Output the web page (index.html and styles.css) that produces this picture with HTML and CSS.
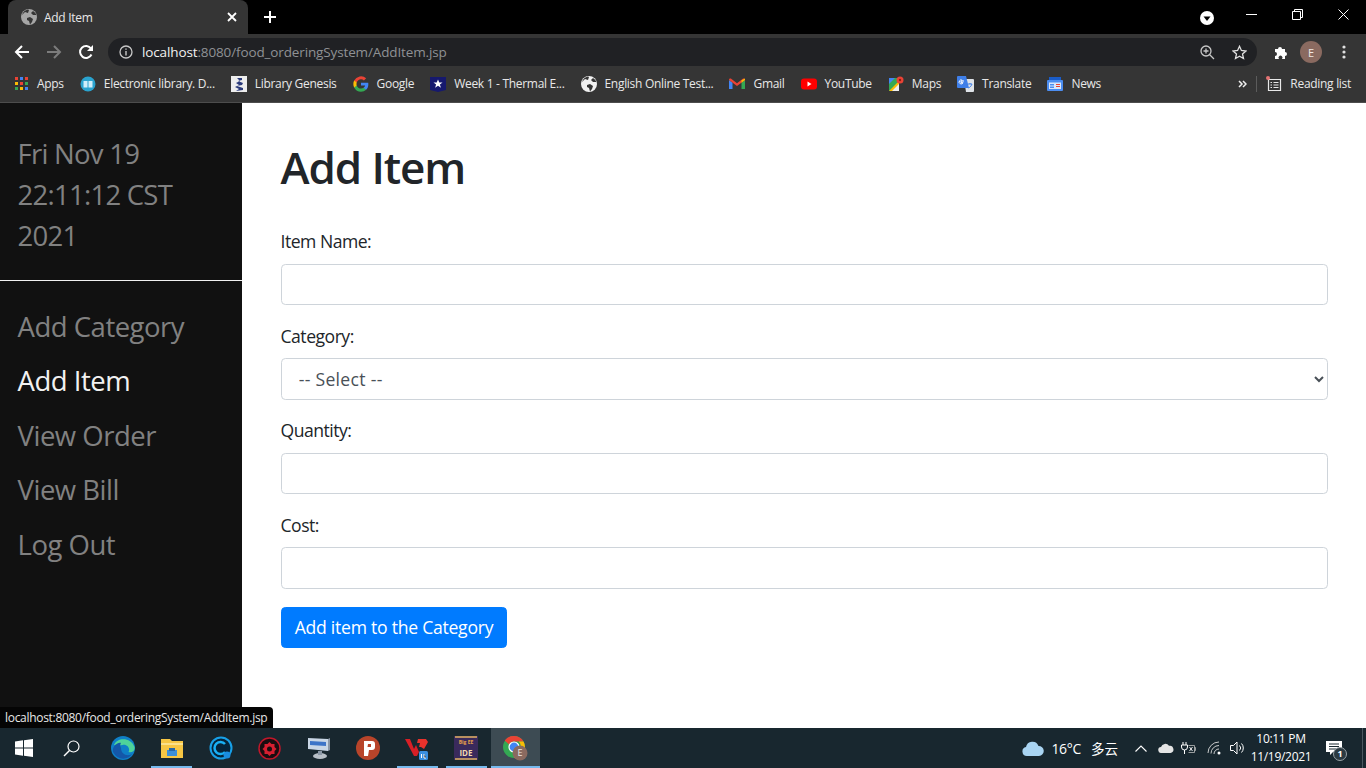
FILE: index.html
```html
<!DOCTYPE html>
<html lang="en">
<head>
    <meta charset="UTF-8">
    <title>Add Item</title>
    <link rel="stylesheet" href="styles.css">
</head>
<body>
    <svg class="defs" width="0" height="0">
        <symbol id="globe" viewBox="0 0 16 16">
            <circle cx="8" cy="8" r="8" fill="currentColor"/>
            <path d="M1 6l3-3 3 1 1-3-1-.5a8 8 0 0 0-6 5.500zM6 9l3-1 3 2-1 3-2 2.500-1-3.500-2-1zM12 2l-2 2 2 2 3.500 0a8 8 0 0 0-3.500-4z" fill="#353535"/>
        </symbol>
    </svg>

    <header class="tabstrip">
        <div class="tab">
            <svg class="tab-icon" width="16" height="16"><use href="#globe"/></svg>
            <span class="tab-title">Add Item</span>
            <svg class="tab-close" width="10" height="10" viewBox="0 0 10 10"><path d="M1 1l8 8M9 1l-8 8" stroke="#fff" stroke-width="1.800"/></svg>
        </div>
        <svg class="new-tab" width="12" height="12" viewBox="0 0 12 12"><path d="M6 0v12M0 6h12" stroke="#fff" stroke-width="2"/></svg>
        <div class="window-controls">
            <svg class="profile-dot" width="14" height="14" viewBox="0 0 14 14"><circle cx="7" cy="7" r="7" fill="#fff"/><path d="M3.500 5.500h7L7 10z" fill="#000"/></svg>
            <svg class="win-btn" width="11" height="11" viewBox="0 0 11 11"><path d="M0 5.500h11" stroke="#fff"/></svg>
            <svg class="win-btn" width="11" height="11" viewBox="0 0 11 11"><path d="M.5 2.500h8v8h-8zM2.500 2.500v-2h8v8h-2" fill="none" stroke="#fff"/></svg>
            <svg class="win-btn" width="11" height="11" viewBox="0 0 11 11"><path d="M.5.5l10 10M10.500.5l-10 10" stroke="#fff"/></svg>
        </div>
    </header>

    <div class="toolbar">
        <svg class="nav-btn" width="16" height="16" viewBox="0 0 16 16"><path d="M15 8H2M8 2L2 8l6 6" fill="none" stroke="#fff" stroke-width="2"/></svg>
        <svg class="nav-btn" width="16" height="16" viewBox="0 0 16 16"><path d="M1 8h13M8 2l6 6-6 6" fill="none" stroke="#7c7c7c" stroke-width="2"/></svg>
        <svg class="nav-btn" width="16" height="16" viewBox="0 0 16 16"><path d="M13.500 10.500A6 6 0 1 1 13 4.500" fill="none" stroke="#fff" stroke-width="2"/><path d="M15 1v6H9z" fill="#fff"/></svg>
        <div class="omnibox">
            <svg class="info-icon" width="14" height="14" viewBox="0 0 14 14"><circle cx="7" cy="7" r="6" fill="none" stroke="#c8c8c8" stroke-width="1.300"/><path d="M7 6v4.500M7 3.500v1.300" stroke="#c8c8c8" stroke-width="1.400"/></svg>
            <span class="url"><b>localhost</b>:8080/food_orderingSystem/AddItem.jsp</span>
            <svg class="omni-zoom" width="15" height="15" viewBox="0 0 15 15"><circle cx="6" cy="6" r="5" fill="none" stroke="#c8c8c8" stroke-width="1.300"/><path d="M9.500 9.500L14 14M3.500 6h5M6 3.500v5" stroke="#c8c8c8" stroke-width="1.300"/></svg>
            <svg class="omni-star" width="15" height="15" viewBox="0 0 15 15"><path d="M7.500 1.300l1.900 4.200 4.500.5-3.400 3 1 4.500-4-2.300-4 2.300 1-4.500-3.400-3 4.500-.5z" fill="none" stroke="#e0e0e0" stroke-width="1.300"/></svg>
        </div>
        <svg class="ext-icon" width="15" height="15" viewBox="0 0 15 15"><path d="M1 4h3a2 2 0 1 1 4 0h3v3a2 2 0 1 1 0 4v3H8a2 2 0 1 0-3 0H1v-3a2 2 0 1 0 0-4z" fill="#fff"/></svg>
        <span class="avatar">E</span>
        <svg class="menu-icon" width="4" height="14" viewBox="0 0 4 14"><circle cx="2" cy="2" r="1.600" fill="#e0e0e0"/><circle cx="2" cy="7" r="1.600" fill="#e0e0e0"/><circle cx="2" cy="12" r="1.600" fill="#e0e0e0"/></svg>
    </div>

    <nav class="bookmarks">
        <a class="bookmark">
            <svg width="13" height="13" viewBox="0 0 13 13" class="apps-icon">
                <path d="M0 0h3v3H0z" fill="#ea4335"/><path d="M5 0h3v3H5z" fill="#4285f4"/><path d="M10 0h3v3h-3z" fill="#ea4335"/>
                <path d="M0 5h3v3H0z" fill="#fbbc05"/><path d="M5 5h3v3H5z" fill="#ea4335"/><path d="M10 5h3v3h-3z" fill="#34a853"/>
                <path d="M0 10h3v3H0z" fill="#34a853"/><path d="M5 10h3v3H5z" fill="#fbbc05"/><path d="M10 10h3v3h-3z" fill="#4285f4"/>
            </svg>
            <span>Apps</span>
        </a>
        <a class="bookmark">
            <svg width="16" height="16" viewBox="0 0 16 16"><circle cx="8" cy="8" r="7.500" fill="#2aa3cf"/><path d="M3.500 5h4v6.500h-4zM8.500 5h4v6.500h-4z" fill="#cfeefa"/></svg>
            <span>Electronic library. D...</span>
        </a>
        <a class="bookmark">
            <svg width="16" height="16" viewBox="0 0 16 16"><path d="M0 0h16v16H0z" fill="#eee"/><path d="M6 2h5v2L7 5l5 2-1 2-5 1 6 2v2l-7 1 3-2-4-2 4-2-3-2 4-2z" fill="#2b3a7a"/></svg>
            <span>Library Genesis</span>
        </a>
        <a class="bookmark">
            <svg width="16" height="16" viewBox="0 0 48 48">
                <path fill="#4285f4" d="M46 24.500c0-1.600-.1-3.100-.4-4.500H24v8.500h12.400a10.600 10.600 0 0 1-4.600 7v5.800h7.400C43.600 37.300 46 31.400 46 24.500z"/>
                <path fill="#34a853" d="M24 47c6.200 0 11.400-2 15.200-5.700l-7.400-5.800c-2 1.400-4.700 2.200-7.800 2.200-6 0-11-4-12.900-9.500H3.500v6A23 23 0 0 0 24 47z"/>
                <path fill="#fbbc05" d="M11.100 28.200a13.800 13.800 0 0 1 0-8.400v-6H3.500a23 23 0 0 0 0 20.400z"/>
                <path fill="#ea4335" d="M24 10.100c3.400 0 6.400 1.200 8.800 3.400l6.600-6.600A23 23 0 0 0 3.500 13.800l7.600 6c1.900-5.700 6.900-9.700 12.900-9.700z"/>
            </svg>
            <span>Google</span>
        </a>
        <a class="bookmark">
            <svg width="16" height="16" viewBox="0 0 16 16"><path d="M0 1h16v13l-8 2-8-2z" fill="#16196e"/><path d="M8 3.500l1.300 3h3.200l-2.600 2 1 3.200L8 9.800l-2.900 1.900 1-3.200-2.600-2h3.200z" fill="#fff"/></svg>
            <span>Week 1 - Thermal E...</span>
        </a>
        <a class="bookmark">
            <svg class="globe-white" width="16" height="16"><use href="#globe"/></svg>
            <span>English Online Test...</span>
        </a>
        <a class="bookmark">
            <svg width="16" height="16" viewBox="0 0 16 16">
                <path d="M0 13V4l3.500 2.800V13z" fill="#4285f4"/><path d="M12.500 13V6.800L16 4v9z" fill="#34a853"/>
                <path d="M0 4c0-1.500 1.500-1.800 2.500-1L8 7.200 13.500 3c1-.8 2.500-.5 2.500 1l-8 6z" fill="#ea4335"/>
                <path d="M12.500 4.200L16 2.500V4l-3.500 2.800z" fill="#fbbc05"/>
            </svg>
            <span>Gmail</span>
        </a>
        <a class="bookmark">
            <svg width="16" height="16" viewBox="0 0 16 16"><rect y="2.500" width="16" height="11" rx="3" fill="#f00"/><path d="M6.500 5.500L10.500 8l-4 2.500z" fill="#fff"/></svg>
            <span>YouTube</span>
        </a>
        <a class="bookmark">
            <svg width="16" height="16" viewBox="0 0 16 16"><path d="M1 2h10v13H1z" fill="#34a853"/><path d="M1 15L11 5v10z" fill="#fbbc05"/><path d="M1 2h6L1 8z" fill="#4285f4"/><path d="M4 15l7-7v7z" fill="#eee"/><circle cx="12" cy="4" r="3.500" fill="#ea4335"/><circle cx="12" cy="4" r="1.200" fill="#8c1c13"/></svg>
            <span>Maps</span>
        </a>
        <a class="bookmark">
            <svg width="17" height="16" viewBox="0 0 17 16"><path d="M7 3h9a1 1 0 0 1 1 1v11a1 1 0 0 1-1 1H9z" fill="#dfe3e8"/><path d="M1 0h8l3 12H1a1 1 0 0 1-1-1V1a1 1 0 0 1 1-1z" fill="#3f7fe8"/><path d="M7 5H4v1.700h2a2 2 0 1 1-.6-2.300" fill="none" stroke="#fff"/><path d="M11 8h4M13 7v1M11.500 12c2-1 3-2.500 3.500-4" fill="none" stroke="#3f7fe8"/></svg>
            <span>Translate</span>
        </a>
        <a class="bookmark">
            <svg width="16" height="16" viewBox="0 0 16 16"><path d="M2 1h12v4H2z" fill="#1a5cc8"/><rect y="4" width="16" height="11" rx="1" fill="#4c8df0"/><path d="M2 6.500h12v6.500H2z" fill="#dbe8fb"/><path d="M3 8h4v1.500H3zM3 10.500h4V12H3z" fill="#4c8df0"/><path d="M9 8h4v1H9zM9 10h4v1H9z" fill="#ea4335"/></svg>
            <span>News</span>
        </a>
        <div class="bookmarks-end">
            <svg class="chevrons" width="9" height="8" viewBox="0 0 9 8"><path d="M1 1l3 3-3 3M5 1l3 3-3 3" fill="none" stroke="#eee" stroke-width="1.500"/></svg>
            <span class="end-sep"></span>
            <a class="bookmark reading">
                <svg width="16" height="16" viewBox="0 0 16 16"><path d="M2.500 3.500h12v11h-12z" fill="none" stroke="#e8e8e8" stroke-width="1.200"/><path d="M4.500 6.500h1.500M7.500 6.500h5M4.500 9h1.500M7.500 9h5M4.500 11.500h1.500M7.500 11.500h5" stroke="#e8e8e8"/><circle cx="2" cy="2" r="2" fill="#e57373"/></svg>
                <span>Reading list</span>
            </a>
        </div>
    </nav>

    <div class="page">
        <aside class="sidebar">
            <div class="date">Fri Nov 19 22:11:12 CST 2021</div>
            <hr class="side-line">
            <ul class="side-nav">
                <li><a>Add Category</a></li>
                <li><a class="active">Add Item</a></li>
                <li><a>View Order</a></li>
                <li><a>View Bill</a></li>
                <li><a>Log Out</a></li>
            </ul>
        </aside>
        <main class="content">
            <h1>Add Item</h1>
            <form>
                <div class="form-group">
                    <label for="name">Item Name:</label>
                    <input type="text" id="name" class="form-control">
                </div>
                <div class="form-group">
                    <label for="category">Category:</label>
                    <select id="category" class="form-control">
                        <option>-- Select --</option>
                    </select>
                </div>
                <div class="form-group">
                    <label for="qty">Quantity:</label>
                    <input type="text" id="qty" class="form-control">
                </div>
                <div class="form-group">
                    <label for="cost">Cost:</label>
                    <input type="text" id="cost" class="form-control">
                </div>
                <button type="button" class="btn">Add item to the Category</button>
            </form>
        </main>
        <div class="status-bubble">localhost:8080/food_orderingSystem/AddItem.jsp</div>
    </div>

    <footer class="taskbar">
        <span class="task-cell">
            <svg width="18" height="18" viewBox="0 0 18 18"><path d="M0 2.500L8 1.300v7.200H0zM9 1.200L18 0v8.500H9zM0 9.500h8v7.200L0 15.500zM9 9.500h9V18L9 16.800z" fill="#fff"/></svg>
        </span>
        <span class="task-cell">
            <svg width="17" height="17" viewBox="0 0 17 17"><circle cx="10.500" cy="6.500" r="5.500" fill="none" stroke="#fff" stroke-width="1.200"/><path d="M6.500 10.500L1 16" stroke="#fff" stroke-width="1.500"/></svg>
        </span>
        <span class="task-cell">
            <svg width="24" height="24" viewBox="0 0 24 24"><circle cx="12" cy="12" r="12" fill="#0f7fc7"/><path d="M3 9C6 1 20 1 23.500 11c1 4-3 6-6 5 2-3-1-8-6-7-4 .5-6 1-8.500 0z" fill="#4ed39a"/><path d="M10 12c0 6 6 9 11 6-4 6-14 7-19-2C1 11 6 6 10 7c-1 1-1 3 0 5z" fill="#1457a8"/></svg>
        </span>
        <span class="task-cell running">
            <svg width="22" height="20" viewBox="0 0 22 20"><path d="M0 1h9l2 2h11v17H0z" fill="#f6c644"/><path d="M0 5h22v2H0z" fill="#fbe08a"/><path d="M6 12h10v6H6z" fill="#3c8fd8"/><path d="M8 10h6v3H8z" fill="#2566a8"/></svg>
        </span>
        <span class="task-cell">
            <svg width="24" height="24" viewBox="0 0 24 24"><circle cx="12" cy="12" r="10.500" fill="#06243a" stroke="#17a0e8" stroke-width="2"/><path d="M16 8a6 6 0 1 0 0 8" fill="none" stroke="#19b0f5" stroke-width="2.500"/><circle cx="18" cy="19" r="3.500" fill="#1a8de0"/></svg>
        </span>
        <span class="task-cell">
            <svg width="23" height="23" viewBox="0 0 23 23"><circle cx="11.500" cy="11.500" r="10.500" fill="#1a0d10" stroke="#c0172a" stroke-width="1.500"/><path d="M11.500 5l2 2 3 0 0 3 2 2-2 2 0 3-3 0-2 2-2-2-3 0 0-3-2-2 2-2 0-3 3 0z" fill="#d61f30"/><circle cx="11.500" cy="12" r="2.500" fill="#1a0d10"/></svg>
        </span>
        <span class="task-cell">
            <svg width="24" height="24" viewBox="0 0 24 24"><path d="M1 2l20 1v12L1 13z" fill="#c9d6e6"/><path d="M3 5l16 1v4L3 9z" fill="#3d74c8"/><path d="M21 3l2-1v12l-2 1z" fill="#8b97a6"/><ellipse cx="13" cy="20" rx="7" ry="3" fill="#b8bfc7"/><path d="M11 15h4v4h-4z" fill="#8b97a6"/></svg>
        </span>
        <span class="task-cell">
            <svg width="24" height="24" viewBox="0 0 24 24"><circle cx="12" cy="12" r="12" fill="#b8442a"/><path d="M8 5h8a3 3 0 0 1 3 3v3a3 3 0 0 1-3 3h-3l-1 6H8zM12 8l-.5 3H15V8z" fill="#fff"/></svg>
        </span>
        <span class="task-cell running">
            <svg width="24" height="24" viewBox="0 0 24 24"><path d="M0 3h5l4 10 2-4 3 7-2 4h-3z" fill="#d81f26"/><path d="M13 3h8l-3 8h-4l1-4h-3zM16 11l5-8 2 3-4 7z" fill="#e8322c"/><rect x="14" y="15" width="9" height="9" rx="1.500" fill="#3a8fe0"/><path d="M16.500 18v4M19 18v4h2" stroke="#fff"/></svg>
        </span>
        <span class="task-cell running">
            <svg width="24" height="24" viewBox="0 0 24 24"><path d="M0 0h24v24H0z" fill="#3a2a5c"/><path d="M1 0h22v2H1zM1 22h22v2H1z" fill="#b89060"/><text x="12" y="8" text-anchor="middle" class="ide-small">Big EE</text><text x="12" y="20" text-anchor="middle" class="ide-text">IDE</text></svg>
        </span>
        <span class="task-cell running active">
            <svg width="26" height="26" viewBox="0 0 26 26">
                <circle cx="12" cy="12" r="11" fill="#34a853"/>
                <path d="M12 1a11 11 0 0 1 9.500 5.500H12a5.500 5.500 0 0 0-5 3L2.700 5.500A11 11 0 0 1 12 1z" fill="#ea4335"/>
                <path d="M21.500 6.500A11 11 0 0 1 12 23l4.700-8a5.500 5.500 0 0 0 0-8.500z" fill="#fbbc05"/>
                <circle cx="12" cy="12" r="5" fill="#4285f4" stroke="#fff" stroke-width="1.200"/>
                <circle cx="18" cy="18" r="7.500" fill="#8a6a60"/>
                <text x="18" y="21" text-anchor="middle" class="chrome-badge">E</text>
            </svg>
        </span>

        <div class="tray">
            <svg class="weather-icon" width="22" height="15" viewBox="0 0 22 15"><path d="M5 15a4.500 4.500 0 0 1-1-8.900A6.500 6.500 0 0 1 16.500 5 5 5 0 0 1 17 15z" fill="#a9d4f2"/></svg>
            <span class="temp">16°C</span>
            <span class="weather-text">多云</span>
            <svg class="tray-caret" width="12" height="7" viewBox="0 0 12 7"><path d="M.5 6.500L6 1l5.500 5.500" fill="none" stroke="#fff" stroke-width="1.100"/></svg>
            <svg class="tray-cloud" width="16" height="10" viewBox="0 0 16 10"><path d="M3.500 10a3 3 0 0 1-.5-6A4.500 4.500 0 0 1 11 2.800 3.600 3.600 0 0 1 12.500 10z" fill="#e4e4e4"/></svg>
            <svg class="tray-power" width="15" height="13" viewBox="0 0 15 13"><path d="M2 0v3M5 0v3M.5 3h6v2a3 3 0 0 1-6 0zM3.500 8v4" fill="none" stroke="#fff"/><path d="M7.500 3.500h6v7h-6M13.500 5.500h1v3h-1" fill="none" stroke="#bbb" stroke-width=".8"/><path d="M8.500 5l3 4M11.500 5l-3 4" stroke="#fff" stroke-width=".9"/></svg>
            <svg class="tray-wifi" width="14" height="14" viewBox="0 0 14 14"><path d="M1 12A11 11 0 0 1 12 1M4 12.500A8 8 0 0 1 12 4.500M7 13a5 5 0 0 1 5-5" fill="none" stroke="#dcdcdc" stroke-width=".9"/><circle cx="12" cy="12" r="1.500" fill="#fff"/></svg>
            <svg class="tray-sound" width="16" height="14" viewBox="0 0 16 14"><path d="M.5 4.500h3L7 1v12L3.500 9.500h-3z" fill="none" stroke="#fff"/><path d="M9.500 4.500a3.500 3.500 0 0 1 0 5M11.500 2.500a6.500 6.500 0 0 1 0 9" fill="none" stroke="#fff"/></svg>
            <div class="clock">
                <span>10:11 PM</span>
                <span>11/19/2021</span>
            </div>
            <span class="notify">
                <svg width="16" height="15" viewBox="0 0 16 15"><path d="M0 0h16v11H7l-3 3v-3H0z" fill="#fff"/><path d="M3 3h10M3 5.500h10M3 8h7" stroke="#1a2a32"/></svg>
                <span class="notify-badge">1</span>
            </span>
            <span class="show-desktop"></span>
        </div>
    </footer>
</body>
</html>
```

FILE: styles.css
```css
* {
    box-sizing: border-box;
}
html, body {
    height: 100%;
}
body {
    margin: 0;
    display: flex;
    flex-direction: column;
    height: 768px;
    overflow: hidden;
    font-family: "Open Sans", "Noto Sans", sans-serif;
    background-color: #ffffff;
}
.defs {
    position: absolute;
}

/* browser chrome */
.tabstrip {
    height: 34px;
    flex: none;
    display: flex;
    align-items: flex-end;
    background-color: #000000;
}
.tab {
    width: 240px;
    height: 34px;
    margin-left: 8px;
    padding: 0 11px 0 13px;
    display: flex;
    align-items: center;
    background-color: #353535;
    border-radius: 8px 8px 0 0;
    color: #e8e8e8;
}
.tab-icon {
    color: #a6a6a6;
}
.tab-title {
    margin-left: 7px;
    flex: 1;
    font-size: 12px;
    letter-spacing: -0.3px;
    color: #e8e8e8;
}
.new-tab {
    margin: 0 0 11px 16px;
}
.window-controls {
    margin-left: auto;
    height: 34px;
    display: flex;
    align-items: center;
}
.profile-dot {
    margin-right: 14px;
    margin-top: 1px;
}
.win-btn {
    margin: 0 17.500px 6px;
}
.toolbar {
    height: 36px;
    flex: none;
    display: flex;
    align-items: center;
    background-color: #353535;
}
.nav-btn {
    margin-left: 14px;
}
.nav-btn + .nav-btn {
    margin-left: 16px;
}
.omnibox {
    width: 1149px;
    height: 28px;
    margin-left: 14px;
    padding: 0 10px 0 11px;
    display: flex;
    align-items: center;
    background-color: #202124;
    border-radius: 14px;
}
.url {
    margin-left: 9px;
    flex: 1;
    font-size: 13.500px;
    letter-spacing: -0.130px;
    color: #8f9194;
    white-space: nowrap;
}
.url b {
    font-weight: 500;
    color: #f1f1f1;
}
.omni-star {
    margin-left: 17px;
}
.ext-icon {
    margin-left: 17px;
}
.avatar {
    width: 22px;
    height: 22px;
    margin-left: 11px;
    display: flex;
    align-items: center;
    justify-content: center;
    background-color: #8a6a60;
    border-radius: 50%;
    font-size: 11px;
    color: #f1e8e4;
}
.menu-icon {
    margin-left: 20px;
}
.bookmarks {
    height: 33px;
    flex: none;
    padding: 0 15px 5px 15px;
    display: flex;
    align-items: center;
    background-color: #353535;
    border-bottom: 1px solid #4d4d4d;
}
.bookmark {
    margin-right: 16px;
    display: flex;
    align-items: center;
    gap: 8px;
    font-size: 12px;
    letter-spacing: -0.300px;
    color: #e8e8e8;
    white-space: nowrap;
}
.apps-icon {
    margin-right: 1px;
}
.globe-white {
    color: #f1f1f1;
}
.bookmarks-end {
    margin-left: auto;
    display: flex;
    align-items: center;
}
.end-sep {
    width: 1px;
    height: 16px;
    margin: 0 9px 0 9px;
    background-color: #5c5c5c;
}
.reading {
    margin-right: 0;
}

/* page */
.page {
    position: relative;
    flex: 1;
    min-height: 0;
    display: flex;
}
.sidebar {
    width: 242px;
    flex: none;
    padding-top: 30px;
    background-color: #111111;
    color: #818181;
}
.date {
    padding: 0 30px 0 17.600px;
    font-size: 27.500px;
    line-height: 41px;
    letter-spacing: -0.750px;
}
.side-line {
    height: 1px;
    margin: 24px 0 19px;
    border: none;
    background-color: #f2f2f2;
}
.side-nav {
    margin: 0;
    padding: 0;
    list-style: none;
}
.side-nav a {
    display: block;
    padding-left: 17.600px;
    font-size: 27.500px;
    line-height: 54.400px;
    letter-spacing: -0.500px;
    color: #818181;
}
.side-nav a.active {
    color: #f1f1f1;
}
.content {
    flex: 1;
    padding: 37.500px 38.500px 0 38.500px;
    color: #212529;
}
h1 {
    margin: 0 0 35px;
    font-size: 44px;
    font-weight: 600;
    line-height: 52.800px;
    letter-spacing: -1.100px;
}
.form-group {
    margin-bottom: 17.600px;
}
label {
    display: block;
    margin-bottom: 8.800px;
    font-size: 17.600px;
    line-height: 26.400px;
    letter-spacing: -0.500px;
}
.form-control {
    display: block;
    width: 100%;
    height: 41.800px;
    padding: 6.600px 13.200px;
    font-family: inherit;
    font-size: 17.600px;
    letter-spacing: 0.300px;
    color: #495057;
    background-color: #ffffff;
    border: 1px solid #ced4da;
    border-radius: 4.400px;
}
.btn {
    height: 41.800px;
    padding: 0 13.200px 2px;
    font-family: inherit;
    font-size: 17.600px;
    letter-spacing: -0.260px;
    color: #ffffff;
    background-color: #007bff;
    border: 1px solid #007bff;
    border-radius: 4.400px;
}
.status-bubble {
    position: absolute;
    left: 0;
    bottom: 0;
    height: 21px;
    padding: 0 6px 0 5px;
    display: flex;
    align-items: center;
    background-color: #050505;
    border-radius: 0 4px 0 0;
    font-size: 12px;
    letter-spacing: -0.300px;
    color: #e8e8e8;
}

/* taskbar */
.taskbar {
    height: 40px;
    flex: none;
    display: flex;
    align-items: stretch;
    background-color: #18272f;
    color: #ffffff;
}
.task-cell {
    width: 49.100px;
    display: flex;
    align-items: center;
    justify-content: center;
    position: relative;
}
.task-cell:first-child {
    width: 47px;
}
.task-cell:nth-child(2) {
    margin-right: 2px;
}
.task-cell.running::after {
    content: "";
    position: absolute;
    left: 4px;
    right: 4px;
    bottom: 0;
    height: 2px;
    background-color: #76b9ed;
}
.task-cell.active {
    background-color: #3d4b53;
}
.task-cell.active::after {
    left: 0;
    right: 0;
}
.ide-small {
    font-size: 5px;
    font-weight: 700;
    fill: #e8a24a;
}
.ide-text {
    font-size: 8px;
    font-weight: 700;
    fill: #f0d8b0;
}
.chrome-badge {
    font-size: 9px;
    fill: #f1e8e4;
}
.tray {
    margin-left: auto;
    display: flex;
    align-items: center;
}
.temp {
    margin-left: 7px;
    font-size: 14px;
    letter-spacing: -0.300px;
}
.weather-text {
    margin-left: 10px;
    font-family: "Noto Sans CJK SC", sans-serif;
    font-size: 13.500px;
}
.tray-caret {
    margin-left: 17px;
}
.tray-cloud {
    margin-left: 11px;
}
.tray-power {
    margin-left: 7px;
}
.tray-wifi {
    margin-left: 11px;
}
.tray-sound {
    margin-left: 9px;
}
.clock {
    width: 62px;
    margin-left: 4px;
    display: flex;
    flex-direction: column;
    align-items: center;
    font-size: 12px;
    line-height: 18px;
    letter-spacing: -0.300px;
}
.notify {
    position: relative;
    margin-left: 14px;
    display: flex;
}
.notify-badge {
    position: absolute;
    left: 7px;
    top: 6px;
    width: 14px;
    height: 14px;
    display: flex;
    align-items: center;
    justify-content: center;
    background-color: #2b3a42;
    border: 1px solid #9aa3a8;
    border-radius: 50%;
    font-size: 9px;
    font-weight: 700;
}
.show-desktop {
    width: 1px;
    height: 40px;
    margin-left: 20px;
    margin-right: 3px;
    background-color: #4a5860;
}
```
